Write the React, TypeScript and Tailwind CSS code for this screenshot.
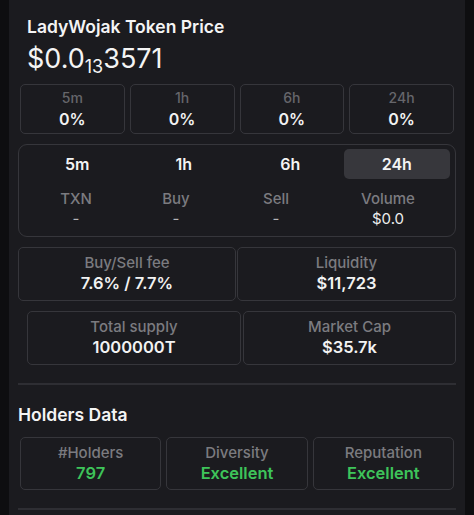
import React from "react";

const tabs = ["5m", "1h", "6h", "24h"];
const changes = [
    { label: "5m", value: "0%" },
    { label: "1h", value: "0%" },
    { label: "6h", value: "0%" },
    { label: "24h", value: "0%" },
];
const stats = [
    { label: "TXN", value: "-" },
    { label: "Buy", value: "-" },
    { label: "Sell", value: "-" },
    { label: "Volume", value: "$0.0" },
];
const holders = [
    { label: "#Holders", value: "797" },
    { label: "Diversity", value: "Excellent" },
    { label: "Reputation", value: "Excellent" },
];

const InfoBox: React.FC<{ label: string; value: string; className?: string; green?: boolean }> = ({
    label,
    value,
    className = "",
    green,
}) => (
    <div className={`flex flex-col items-center border border-[#36363b] rounded-[5px] pt-[6px] ${className}`}>
        <span className="text-[15px] leading-[18px] text-[#7b7b80] font-medium">{label}</span>
        <span
            className={`text-[16.5px] leading-[22px] font-semibold ${green ? "text-[#3ec45a]" : "text-[#f2f2f2]"}`}
        >
            {value}
        </span>
    </div>
);

export default function App() {
    return (
        <div
            className="w-[474px] h-[515px] bg-[#0e0e10] flex overflow-hidden"
            style={{ fontFamily: "Inter, 'Noto Sans', sans-serif" }}
        >
            <div className="ml-[9px] w-[456px] h-full bg-[#1b1b1f] flex flex-col">
                {/* header */}
                <div className="pl-[18px] pt-[16px] text-[17.5px] leading-[22px] font-semibold text-[#f4f4f4]">
                    LadyWojak Token Price
                </div>
                <div className="pl-[18px] mt-[6px] text-[27px] leading-[30px] text-[#f4f4f4]">
                    $0.0<sub className="text-[18px] relative top-[5px] align-baseline">13</sub>3571
                </div>

                {/* price change boxes */}
                <div className="mt-[10px] ml-[11px] w-[434px] grid grid-cols-4 gap-[5px]">
                    {changes.map((c) => (
                        <div
                            key={c.label}
                            className="h-[50px] flex flex-col items-center border border-[#36363b] rounded-[5px] pt-[4px]"
                        >
                            <span className="text-[14px] leading-[18px] text-[#66666b] font-medium">{c.label}</span>
                            <span className="text-[16px] leading-[20px] font-semibold text-[#f2f2f2] mt-[2px]">
                                {c.value}
                            </span>
                        </div>
                    ))}
                </div>

                {/* txn panel */}
                <div className="mt-[10px] ml-[9px] w-[438px] h-[93px] border border-[#36363b] rounded-[9px] pt-[4px] px-[5px]">
                    <div className="grid grid-cols-4">
                        {tabs.map((t) => (
                            <div
                                key={t}
                                className={`h-[30px] flex items-center justify-center rounded-[5px] text-[16px] font-semibold text-[#f4f4f4] ${
                                    t === "24h" ? "bg-[#37373c]" : ""
                                }`}
                            >
                                {t}
                            </div>
                        ))}
                    </div>
                    <div className="grid grid-cols-[100px_100px_100px_124px] ml-[2px] mt-[11px]">
                        {stats.map((s) => (
                            <div key={s.label} className="flex flex-col items-center">
                                <span className="text-[15px] leading-[18px] text-[#7b7b80] font-medium">{s.label}</span>
                                <span
                                    className={`text-[15px] leading-[22px] ${
                                        s.value === "-" ? "text-[#b5b5b8]" : "text-[#ededed]"
                                    }`}
                                >
                                    {s.value}
                                </span>
                            </div>
                        ))}
                    </div>
                </div>

                {/* fees / liquidity */}
                <div className="mt-[10px] ml-[9px] w-[438px] flex gap-[1px]">
                    <InfoBox label="Buy/Sell fee" value="7.6% / 7.7%" className="w-[218px] h-[54px]" />
                    <InfoBox label="Liquidity" value="$11,723" className="w-[219px] h-[54px]" />
                </div>
                <div className="mt-[10px] ml-[18px] w-[429px] flex gap-[2px]">
                    <InfoBox label="Total supply" value="1000000T" className="w-[214px] h-[54px]" />
                    <InfoBox label="Market Cap" value="$35.7k" className="w-[213px] h-[54px]" />
                </div>

                <div className="mt-[18px] ml-[9px] w-[438px] h-[2px] bg-[#2e2e33]" />

                {/* holders */}
                <div className="ml-[9px] mt-[19px] text-[17.5px] leading-[22px] font-semibold text-[#f4f4f4]">
                    Holders Data
                </div>
                <div className="mt-[11px] ml-[11px] w-[434px] grid grid-cols-3 gap-[5px]">
                    {holders.map((h) => (
                        <InfoBox key={h.label} label={h.label} value={h.value} green className="h-[53px]" />
                    ))}
                </div>
                <div className="mt-[18px] ml-[9px] w-[438px] h-[2px] bg-[#2e2e33]" />
            </div>
        </div>
    );
}
